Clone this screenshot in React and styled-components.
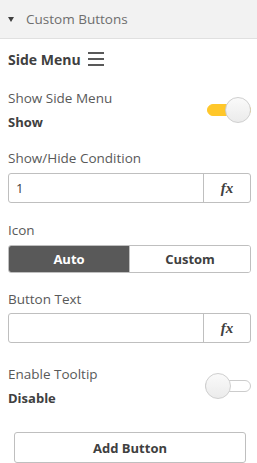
import styled, { createGlobalStyle } from 'styled-components';

const GlobalStyle = createGlobalStyle`
  html, body {
    margin: 0;
    padding: 0;
    background: #fff;
  }
  body {
    font-family: 'Open Sans', 'Liberation Sans', sans-serif;
    color: #595959;
  }
`;

export default function App() {
  return (
    <>
      <GlobalStyle />
      <Panel>
        <Header>
          <Caret />
          <span>Custom Buttons</span>
        </Header>
        <Body>
          <SectionTitle>
            Side Menu
            <Burger>
              <i />
              <i />
              <i />
            </Burger>
          </SectionTitle>

          <SwitchRow>
            <div>
              <Label>Show Side Menu</Label>
              <Value>Show</Value>
            </div>
            <Switch on />
          </SwitchRow>

          <Field>
            <Label>Show/Hide Condition</Label>
            <ExprInput value="1" />
          </Field>

          <Field>
            <Label>Icon</Label>
            <Segmented>
              <Segment active>Auto</Segment>
              <Segment>Custom</Segment>
            </Segmented>
          </Field>

          <Field tight>
            <Label>Button Text</Label>
            <ExprInput value="" />
          </Field>

          <SwitchRow gap={22}>
            <div>
              <Label>Enable Tooltip</Label>
              <Value>Disable</Value>
            </div>
            <Switch />
          </SwitchRow>

          <AddButton>Add Button</AddButton>
        </Body>
      </Panel>
    </>
  );
}

function ExprInput({ value }) {
  return (
    <InputBox>
      <TextArea>{value}</TextArea>
      <FxButton>fx</FxButton>
    </InputBox>
  );
}

function Switch({ on }) {
  return (
    <SwitchWrap>
      <Track on={on ? 1 : 0} />
      <Knob on={on ? 1 : 0} />
    </SwitchWrap>
  );
}

const Panel = styled.div`
  width: 257px;
  height: 463px;
  overflow: hidden;
`;

const Header = styled.div`
  height: 38px;
  background: #f2f2f2;
  border-bottom: 1px solid #e0e0e0;
  display: flex;
  align-items: center;
  gap: 7px;
  padding-left: 8px;
  font-size: 13.5px;
  color: #6e6e6e;
`;

const Caret = styled.span`
  width: 0;
  height: 0;
  border-left: 3.5px solid transparent;
  border-right: 3.5px solid transparent;
  border-top: 5px solid #404040;
  margin-right: 5px;
`;

const Body = styled.div`
  padding: 0 6px 0 8px;
  display: flex;
  flex-direction: column;
`;

const SectionTitle = styled.div`
  display: flex;
  align-items: center;
  gap: 7px;
  margin-top: 10px;
  height: 20px;
  font-size: 14px;
  font-weight: 700;
  color: #404040;
`;

const Burger = styled.span`
  display: flex;
  flex-direction: column;
  gap: 4px;
  width: 16px;
  i {
    display: block;
    height: 2px;
    background: #595959;
  }
`;

const SwitchRow = styled.div`
  display: flex;
  justify-content: space-between;
  align-items: center;
  margin-top: ${(p) => p.gap || 20}px;
`;

const Label = styled.div`
  font-size: 13.5px;
  line-height: 18px;
  color: #595959;
`;

const Value = styled.div`
  font-size: 13px;
  font-weight: 700;
  line-height: 18px;
  margin-top: 6px;
  color: #404040;
`;

const SwitchWrap = styled.div`
  position: relative;
  width: 46px;
  height: 26px;
`;

const Track = styled.div`
  position: absolute;
  left: ${(p) => (p.on ? '2px' : '0')};
  right: 0;
  top: 7px;
  height: 12px;
  border-radius: 6px;
  background: ${(p) => (p.on ? '#ffc72a' : '#fff')};
  border: 1px solid ${(p) => (p.on ? '#ffc72a' : '#cccccc')};
  box-sizing: border-box;
`;

const Knob = styled.div`
  position: absolute;
  top: 0;
  left: ${(p) => (p.on ? '20px' : '0')};
  width: 26px;
  height: 26px;
  box-sizing: border-box;
  border-radius: 50%;
  border: 1px solid #cfcfcf;
  background: linear-gradient(#fafafa, #ebebeb);
`;

const Field = styled.div`
  display: flex;
  flex-direction: column;
  gap: ${(p) => (p.tight ? '5px' : '6px')};
  margin-top: ${(p) => (p.tight ? '17px' : '18px')};
`;

const InputBox = styled.div`
  display: flex;
  height: 30px;
  border: 1px solid #bfbfbf;
  border-radius: 3px;
  box-sizing: border-box;
`;

const TextArea = styled.div`
  flex: 1;
  display: flex;
  align-items: center;
  padding-left: 7px;
  font-size: 13px;
  color: #404040;
`;

const FxButton = styled.div`
  width: 46px;
  border-left: 1px solid #bfbfbf;
  display: flex;
  align-items: center;
  justify-content: center;
  font-family: 'Liberation Serif', 'DejaVu Serif', serif;
  font-style: italic;
  font-weight: 700;
  font-size: 15px;
  color: #404040;
`;

const Segmented = styled.div`
  display: flex;
  height: 28px;
  border: 1px solid #bfbfbf;
  border-radius: 3px;
  overflow: hidden;
  box-sizing: border-box;
`;

const Segment = styled.div`
  flex: 1;
  display: flex;
  align-items: center;
  justify-content: center;
  font-size: 13px;
  font-weight: 700;
  background: ${(p) => (p.active ? '#595959' : '#fff')};
  color: ${(p) => (p.active ? '#fff' : '#404040')};
  & + & {
    border-left: 1px solid #bfbfbf;
  }
`;

const AddButton = styled.button`
  margin: 25px 5px 0 6px;
  height: 31px;
  border: 1px solid #bfbfbf;
  border-radius: 3px;
  background: #fff;
  font-family: inherit;
  font-size: 13px;
  font-weight: 700;
  color: #404040;
`;
